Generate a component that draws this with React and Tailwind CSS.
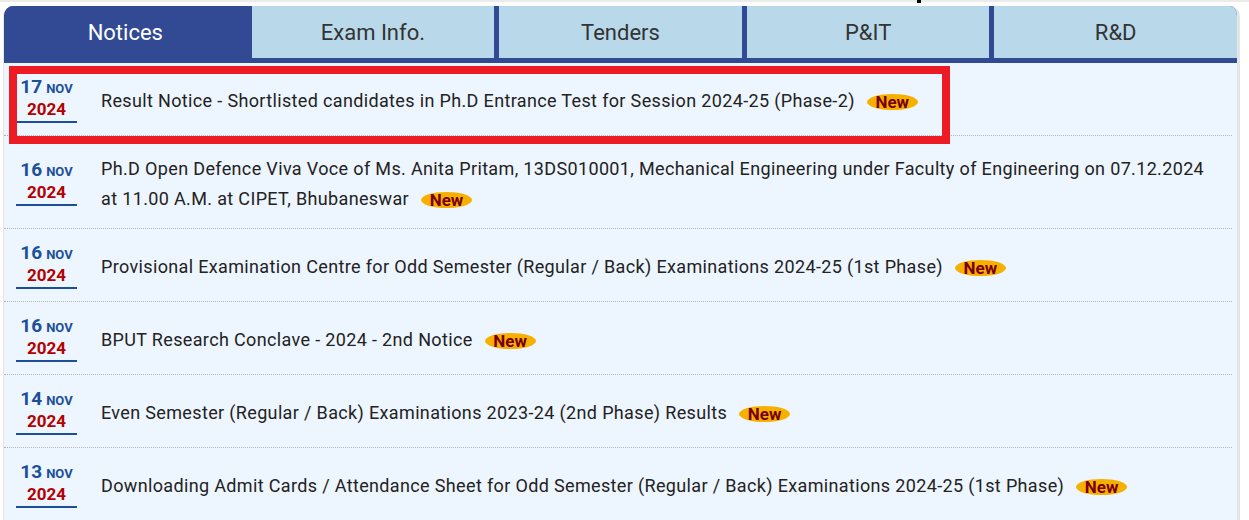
import React from 'react'

const tabs = ['Notices', 'Exam Info.', 'Tenders', 'P&IT', 'R&D']

const notices = [
  { day: '17', mon: 'NOV', year: '2024', text: 'Result Notice - Shortlisted candidates in Ph.D Entrance Test for Session 2024-25 (Phase-2)' },
  { day: '16', mon: 'NOV', year: '2024', text: 'Ph.D Open Defence Viva Voce of Ms. Anita Pritam, 13DS010001, Mechanical Engineering under Faculty of Engineering on 07.12.2024 at 11.00 A.M. at CIPET, Bhubaneswar' },
  { day: '16', mon: 'NOV', year: '2024', text: 'Provisional Examination Centre for Odd Semester (Regular / Back) Examinations 2024-25 (1st Phase)' },
  { day: '16', mon: 'NOV', year: '2024', text: 'BPUT Research Conclave - 2024 - 2nd Notice' },
  { day: '14', mon: 'NOV', year: '2024', text: 'Even Semester (Regular / Back) Examinations 2023-24 (2nd Phase) Results' },
  { day: '13', mon: 'NOV', year: '2024', text: 'Downloading Admit Cards / Attendance Sheet for Odd Semester (Regular / Back) Examinations 2024-25 (1st Phase)' },
]

function DateBox({ day, mon, year }) {
  return (
    <div className="w-[61px] h-[48px] shrink-0 flex flex-col items-center border-b-2 border-[#1c4f99] font-bold">
      <div className="h-[24px] flex items-baseline gap-[4px] text-[#1c4f99] leading-[24px]">
        <span className="text-[19px]">{day}</span>
        <span className="text-[13px]">{mon}</span>
      </div>
      <div className="h-[21px] leading-[21px] text-[17px] text-[#b30000]">{year}</div>
    </div>
  )
}

export default function App() {
  return (
    <div className="relative w-[1249px] h-[520px] overflow-hidden bg-white" style={{ fontFamily: 'Roboto, "Liberation Sans", sans-serif' }}>
      <div className="h-[2px] bg-[#ebebeb]" />
      <div className="absolute left-[917px] top-0 w-[4px] h-[3px] bg-black" />

      <div className="ml-[3px] mt-[4px] w-[1237px] rounded-t-[10px] overflow-hidden border-l border-r-[3px] border-[#e4e4e4]">
        {/* tabs */}
        <div className="flex gap-[5px] bg-[#324a93] pb-[5px]">
          {tabs.map((t, i) => (
            <div
              key={t}
              className={
                'flex-1 h-[52px] flex items-center justify-center text-[22px] ' +
                (i === 0 ? 'bg-[#324a93] text-white' : 'bg-[#b9d9ea] text-[#333]')
              }
            >
              {t}
            </div>
          ))}
        </div>

        {/* list */}
        <div className="bg-[#edf5fe] pr-[5px]">
          {notices.map((n, i) => (
            <div key={i} className="flex items-center gap-6 pl-[12px] py-3 border-b border-dotted border-[#b5b5b5]">
              <DateBox day={n.day} mon={n.mon} year={n.year} />
              <p className="flex-1 pr-[15px] pt-[6px] pb-[2px] text-[18px] leading-[30px] tracking-[0.35px] text-[#222]">
                {n.text}
                <span className="ml-3 inline-flex h-4 w-[51px] items-center justify-center rounded-[50%] bg-[#f6b100] align-[-1px] text-[17px] leading-[16px] tracking-normal font-bold text-[#7a0000]">
                  New
                </span>
              </p>
            </div>
          ))}
        </div>
      </div>

      {/* highlight box */}
      <div className="absolute left-[9px] top-[66px] w-[941px] h-[78px] border-[8px] border-[#ed1c24]" />
    </div>
  )
}
